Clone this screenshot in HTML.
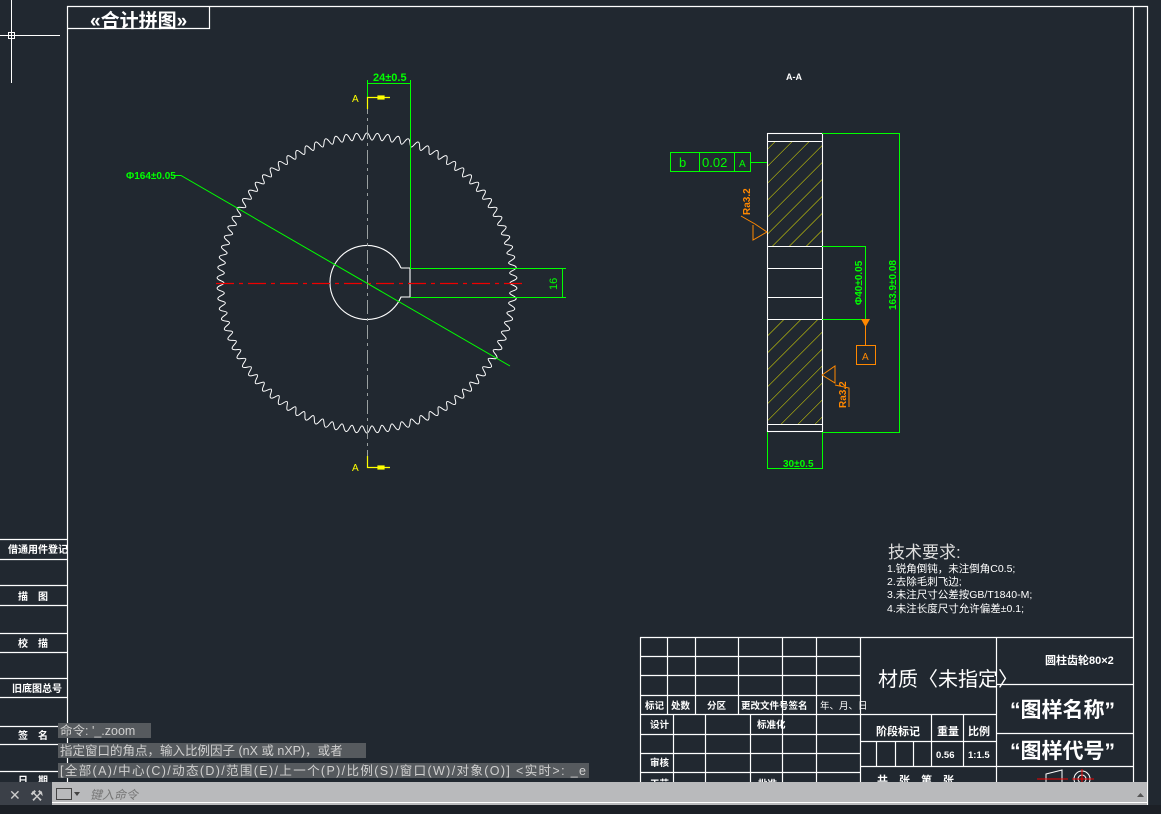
<!DOCTYPE html>
<html><head><meta charset="utf-8"><style>
html,body{margin:0;padding:0;background:#212830;width:1161px;height:814px;overflow:hidden}
svg{display:block}
text{font-family:"Liberation Sans","Noto Sans CJK SC",sans-serif}
</style></head><body>
<svg width="1161" height="814" viewBox="0 0 1161 814" xmlns="http://www.w3.org/2000/svg">
<defs>
<path id="t" d="M-4.99,-142.91 C-3,-143 -2.6,-150 0,-150 C2.6,-150 3,-143 4.99,-142.91" fill="none" stroke="#fff" stroke-width="1"/>
<pattern id="h" width="12" height="12" patternUnits="userSpaceOnUse" patternTransform="rotate(45)"><line x1="0" y1="0" x2="0" y2="12" stroke="#e6e600" stroke-width="1"/></pattern>
</defs>
<rect width="1161" height="814" fill="#212830"/>
<g stroke="#fff" stroke-width="1" fill="none">
<line x1="11.5" y1="0" x2="11.5" y2="83"/>
<line x1="0" y1="35.5" x2="60" y2="35.5"/>
<rect x="8.5" y="32.5" width="6" height="6"/>
</g>
<g stroke="#fff" stroke-width="1.2" fill="none">
<polyline points="67.5,814 67.5,6.5 1147.5,6.5 1147.5,814"/>
<line x1="1133.5" y1="6.5" x2="1133.5" y2="790"/>
<polyline points="67.5,28.5 209.5,28.5 209.5,6.5"/>
</g>
<text x="90" y="27" fill="#fff" font-size="19" font-weight="bold">«合计拼图»</text>
<g stroke="#fff" stroke-width="1.2">
<line x1="0" y1="539.5" x2="67" y2="539.5"/><line x1="0" y1="559.5" x2="67" y2="559.5"/>
<line x1="0" y1="585.5" x2="67" y2="585.5"/><line x1="0" y1="605.5" x2="67" y2="605.5"/>
<line x1="0" y1="633.5" x2="67" y2="633.5"/><line x1="0" y1="652.5" x2="67" y2="652.5"/>
<line x1="0" y1="678.5" x2="67" y2="678.5"/><line x1="0" y1="697.5" x2="67" y2="697.5"/>
<line x1="0" y1="726.5" x2="67" y2="726.5"/><line x1="0" y1="744.5" x2="67" y2="744.5"/>
<line x1="0" y1="771.5" x2="67" y2="771.5"/>
</g>
<g fill="#fff" font-size="10" font-weight="bold">
<text x="8" y="553">借通用件登记</text>
<text x="18" y="600">描　图</text>
<text x="18" y="647">校　描</text>
<text x="12" y="692">旧底图总号</text>
<text x="18" y="739">签　名</text>
<text x="18" y="784">日　期</text>
</g>
<!-- gear teeth -->
<g transform="translate(367,283)">
<use href="#t" transform="rotate(0)"/><use href="#t" transform="rotate(4)"/><use href="#t" transform="rotate(8)"/><use href="#t" transform="rotate(12)"/><use href="#t" transform="rotate(16)"/><use href="#t" transform="rotate(20)"/><use href="#t" transform="rotate(24)"/><use href="#t" transform="rotate(28)"/><use href="#t" transform="rotate(32)"/><use href="#t" transform="rotate(36)"/>
<use href="#t" transform="rotate(40)"/><use href="#t" transform="rotate(44)"/><use href="#t" transform="rotate(48)"/><use href="#t" transform="rotate(52)"/><use href="#t" transform="rotate(56)"/><use href="#t" transform="rotate(60)"/><use href="#t" transform="rotate(64)"/><use href="#t" transform="rotate(68)"/><use href="#t" transform="rotate(72)"/><use href="#t" transform="rotate(76)"/>
<use href="#t" transform="rotate(80)"/><use href="#t" transform="rotate(84)"/><use href="#t" transform="rotate(88)"/><use href="#t" transform="rotate(92)"/><use href="#t" transform="rotate(96)"/><use href="#t" transform="rotate(100)"/><use href="#t" transform="rotate(104)"/><use href="#t" transform="rotate(108)"/><use href="#t" transform="rotate(112)"/><use href="#t" transform="rotate(116)"/>
<use href="#t" transform="rotate(120)"/><use href="#t" transform="rotate(124)"/><use href="#t" transform="rotate(128)"/><use href="#t" transform="rotate(132)"/><use href="#t" transform="rotate(136)"/><use href="#t" transform="rotate(140)"/><use href="#t" transform="rotate(144)"/><use href="#t" transform="rotate(148)"/><use href="#t" transform="rotate(152)"/><use href="#t" transform="rotate(156)"/>
<use href="#t" transform="rotate(160)"/><use href="#t" transform="rotate(164)"/><use href="#t" transform="rotate(168)"/><use href="#t" transform="rotate(172)"/><use href="#t" transform="rotate(176)"/><use href="#t" transform="rotate(180)"/><use href="#t" transform="rotate(184)"/><use href="#t" transform="rotate(188)"/><use href="#t" transform="rotate(192)"/><use href="#t" transform="rotate(196)"/>
<use href="#t" transform="rotate(200)"/><use href="#t" transform="rotate(204)"/><use href="#t" transform="rotate(208)"/><use href="#t" transform="rotate(212)"/><use href="#t" transform="rotate(216)"/><use href="#t" transform="rotate(220)"/><use href="#t" transform="rotate(224)"/><use href="#t" transform="rotate(228)"/><use href="#t" transform="rotate(232)"/><use href="#t" transform="rotate(236)"/>
<use href="#t" transform="rotate(240)"/><use href="#t" transform="rotate(244)"/><use href="#t" transform="rotate(248)"/><use href="#t" transform="rotate(252)"/><use href="#t" transform="rotate(256)"/><use href="#t" transform="rotate(260)"/><use href="#t" transform="rotate(264)"/><use href="#t" transform="rotate(268)"/><use href="#t" transform="rotate(272)"/><use href="#t" transform="rotate(276)"/>
<use href="#t" transform="rotate(280)"/><use href="#t" transform="rotate(284)"/><use href="#t" transform="rotate(288)"/><use href="#t" transform="rotate(292)"/><use href="#t" transform="rotate(296)"/><use href="#t" transform="rotate(300)"/><use href="#t" transform="rotate(304)"/><use href="#t" transform="rotate(308)"/><use href="#t" transform="rotate(312)"/><use href="#t" transform="rotate(316)"/>
<use href="#t" transform="rotate(320)"/><use href="#t" transform="rotate(324)"/><use href="#t" transform="rotate(328)"/><use href="#t" transform="rotate(332)"/><use href="#t" transform="rotate(336)"/><use href="#t" transform="rotate(340)"/><use href="#t" transform="rotate(344)"/><use href="#t" transform="rotate(348)"/><use href="#t" transform="rotate(352)"/><use href="#t" transform="rotate(356)"/>
</g>
<g fill="none" stroke="#fff" stroke-width="1.1">
<path d="M401,268 L410,268 L410,297 L401,297 A37,37 0 1 1 401,268"/>
</g>
<line x1="367.5" y1="100" x2="367.5" y2="465" stroke="#9aa0a0" stroke-width="1" stroke-dasharray="14,4,3,4"/>
<line x1="216" y1="283.5" x2="522" y2="283.5" stroke="#e00" stroke-width="1.3" stroke-dasharray="18,5,4,5"/>
<g stroke="#0f0" stroke-width="1" fill="none">
<line x1="367.5" y1="80" x2="367.5" y2="100"/>
<line x1="410.5" y1="80" x2="410.5" y2="268"/>
<line x1="367" y1="83.5" x2="410" y2="83.5"/>
<line x1="410" y1="268.5" x2="566" y2="268.5"/>
<line x1="410" y1="297.5" x2="566" y2="297.5"/>
<line x1="562.5" y1="268" x2="562.5" y2="297"/>
<polyline points="173,175.5 181,175.5 510,366"/>
</g>
<text x="373" y="81" fill="#0f0" font-size="11" font-weight="bold">24±0.5</text>
<text x="126" y="179" fill="#0f0" font-size="10" font-weight="bold">Φ164±0.05</text>
<text x="0" y="0" fill="#0f0" font-size="11" transform="translate(557,290) rotate(-90)">16</text>
<g stroke="#ff0" stroke-width="1.2" fill="#ff0">
<polyline points="367.5,109 367.5,97.5 390,97.5" fill="none"/>
<polyline points="367.5,456 367.5,467.5 390,467.5" fill="none"/>
<rect x="378" y="96" width="6" height="3"/><rect x="378" y="466" width="6" height="3"/>
</g>
<text x="352" y="102" fill="#ff0" font-size="10">A</text>
<text x="352" y="471" fill="#ff0" font-size="10">A</text>
<text x="786" y="80" fill="#fff" font-size="9" font-weight="bold">A-A</text>
<rect x="767" y="141" width="55" height="105" fill="url(#h)"/>
<rect x="767" y="319" width="55" height="105" fill="url(#h)"/>
<g stroke="#fff" stroke-width="1.1" fill="none">
<rect x="767.5" y="133.5" width="55" height="298"/>
<line x1="767" y1="141.5" x2="822" y2="141.5"/><line x1="767" y1="246.5" x2="822" y2="246.5"/>
<line x1="767" y1="268.5" x2="822" y2="268.5"/><line x1="767" y1="297.5" x2="822" y2="297.5"/>
<line x1="767" y1="319.5" x2="822" y2="319.5"/><line x1="767" y1="424.5" x2="822" y2="424.5"/>
</g>
<g stroke="#0f0" stroke-width="1" fill="none">
<polyline points="822,133.5 899.5,133.5 899.5,432.5 822,432.5"/>
<polyline points="822,246.5 865.5,246.5 865.5,319.5 822,319.5"/>
<polyline points="767.5,432 767.5,468.5 822.5,468.5 822.5,432"/>
<rect x="670.5" y="152.5" width="80" height="19"/>
<line x1="699.5" y1="152" x2="699.5" y2="171"/><line x1="734.5" y1="152" x2="734.5" y2="171"/>
<line x1="750" y1="162.5" x2="767" y2="162.5"/>
</g>
<g fill="#0f0" font-size="13">
<text x="679" y="167">b</text><text x="702" y="167">0.02</text><text x="739" y="167" font-size="10">A</text>
</g>
<text x="783" y="467" fill="#0f0" font-size="10" font-weight="bold">30±0.5</text>
<text x="0" y="0" fill="#0f0" font-size="10" font-weight="bold" transform="translate(862,305) rotate(-90)">Φ40±0.05</text>
<text x="0" y="0" fill="#0f0" font-size="10" font-weight="bold" transform="translate(896,310) rotate(-90)">163.9±0.08</text>
<g stroke="#f80" stroke-width="1" fill="none">
<polyline points="741,216 755,224 767,232 753,240 753,225"/>
<polyline points="822,375 835,366 835,383 822,375"/>
<line x1="865.5" y1="320" x2="865.5" y2="345"/>
<rect x="856.5" y="345.5" width="19" height="19"/>
<polyline points="835,385 849,388 849,407"/>
</g>
<polygon points="861,319 870,319 865.5,327" fill="#f80"/>
<text x="862" y="360" fill="#f80" font-size="10">A</text>
<text x="0" y="0" fill="#f80" font-size="10" font-weight="bold" transform="translate(750,215) rotate(-90)">Ra3.2</text>
<text x="0" y="0" fill="#f80" font-size="10" font-weight="bold" transform="translate(846,408) rotate(-90)">Ra3.2</text>
<text x="888" y="558" fill="#ddd" font-size="17">技术要求:</text>
<g fill="#fff" font-size="10.5">
<text x="887" y="572">1.锐角倒钝，未注倒角C0.5;</text>
<text x="887" y="585">2.去除毛刺飞边;</text>
<text x="887" y="598">3.未注尺寸公差按GB/T1840-M;</text>
<text x="887" y="612">4.未注长度尺寸允许偏差±0.1;</text>
</g>
<g stroke="#fff" stroke-width="1.2" fill="none">
<line x1="640" y1="637.5" x2="1133" y2="637.5"/>
<line x1="640.5" y1="637" x2="640.5" y2="790"/>
<line x1="860.5" y1="637" x2="860.5" y2="790"/>
<line x1="996.5" y1="637" x2="996.5" y2="790"/>
<line x1="640" y1="656.5" x2="860" y2="656.5"/><line x1="640" y1="675.5" x2="860" y2="675.5"/>
<line x1="640" y1="695.5" x2="860" y2="695.5"/><line x1="640" y1="714.5" x2="860" y2="714.5"/>
<line x1="640" y1="734.5" x2="860" y2="734.5"/><line x1="640" y1="753.5" x2="860" y2="753.5"/>
<line x1="640" y1="772.5" x2="860" y2="772.5"/>
<line x1="667.5" y1="637" x2="667.5" y2="714"/><line x1="695.5" y1="637" x2="695.5" y2="714"/>
<line x1="738.5" y1="637" x2="738.5" y2="714"/><line x1="782.5" y1="637" x2="782.5" y2="790"/>
<line x1="816.5" y1="637" x2="816.5" y2="790"/>
<line x1="673.5" y1="714" x2="673.5" y2="790"/><line x1="705.5" y1="714" x2="705.5" y2="790"/>
<line x1="750.5" y1="714" x2="750.5" y2="790"/>
<line x1="860" y1="714.5" x2="996" y2="714.5"/><line x1="860" y1="741.5" x2="996" y2="741.5"/>
<line x1="860" y1="766.5" x2="996" y2="766.5"/>
<line x1="931.5" y1="714" x2="931.5" y2="766"/><line x1="963.5" y1="714" x2="963.5" y2="766"/>
<line x1="876.5" y1="741" x2="876.5" y2="766"/><line x1="895.5" y1="741" x2="895.5" y2="766"/>
<line x1="913.5" y1="741" x2="913.5" y2="766"/>
<line x1="996" y1="684.5" x2="1133" y2="684.5"/><line x1="996" y1="733.5" x2="1133" y2="733.5"/>
<line x1="996" y1="766.5" x2="1133" y2="766.5"/>
</g>
<g fill="#fff" font-size="9.5" font-weight="bold">
<text x="645" y="709">标记</text><text x="671" y="709">处数</text><text x="707" y="709">分区</text>
<text x="741" y="709">更改文件号签名</text><text x="820" y="709" font-weight="normal">年、月、日</text>
<text x="650" y="728">设计</text><text x="757" y="728">标准化</text>
<text x="650" y="766">审核</text><text x="650" y="787">工艺</text><text x="758" y="787">批准</text>
<text x="876" y="735" font-size="11">阶段标记</text><text x="937" y="735" font-size="11">重量</text><text x="968" y="735" font-size="11">比例</text>
<text x="936" y="758">0.56</text><text x="968" y="758">1:1.5</text>
<text x="877" y="784" font-size="11">共　张　第　张</text>
<text x="1045" y="664" font-size="11">圆柱齿轮80×2</text>
</g>
<text x="878" y="686" fill="#fff" font-size="20">材质〈未指定〉</text>
<text x="1010" y="717" fill="#fff" font-size="21" font-weight="bold">“图样名称”</text>
<text x="1010" y="758" fill="#fff" font-size="21" font-weight="bold">“图样代号”</text>
<g stroke="#fff" fill="none" stroke-width="1">
<polygon points="1046,774 1062,770 1062,788 1046,784"/>
<circle cx="1082" cy="779" r="8"/><circle cx="1082" cy="779" r="4"/>
</g>
<g stroke="#e00" stroke-width="1"><line x1="1037" y1="779" x2="1068" y2="779"/><line x1="1072" y1="779" x2="1094" y2="779"/><line x1="1082" y1="769" x2="1082" y2="790"/></g>
<g font-size="12.5" fill="#cfcfcf">
<rect x="58" y="723" width="93" height="15" fill="#565a5e"/>
<text x="60" y="735">命令: '_.zoom</text>
<rect x="58" y="743" width="308" height="15" fill="#565a5e"/>
<text x="60" y="755">指定窗口的角点，输入比例因子 (nX 或 nXP)，或者</text>
<rect x="58" y="763" width="531" height="15" fill="#565a5e"/>
<text x="60" y="775" textLength="526">[全部(A)/中心(C)/动态(D)/范围(E)/上一个(P)/比例(S)/窗口(W)/对象(O)] &lt;实时&gt;: _e</text>
</g>
<rect x="0" y="782" width="52" height="23" fill="#3b4048"/>
<rect x="52" y="782" width="1095" height="23" fill="#b9babc"/>
<line x1="52" y1="802.5" x2="1147" y2="802.5" stroke="#fff"/>
<rect x="0" y="805" width="1161" height="9" fill="#1c2026"/>
<text x="9" y="800" fill="#ccc" font-size="14">✕</text>
<text x="30" y="801" fill="#ccc" font-size="15">⚒</text>
<rect x="56.5" y="788.5" width="15" height="11" fill="none" stroke="#444"/>
<polygon points="74,792 80,792 77,796" fill="#444"/>
<text x="90" y="799" fill="#777" font-size="12" font-style="italic">键入命令</text>
<polygon points="1137,797 1144,797 1140.5,793" fill="#555"/>
</svg>
</body></html>
